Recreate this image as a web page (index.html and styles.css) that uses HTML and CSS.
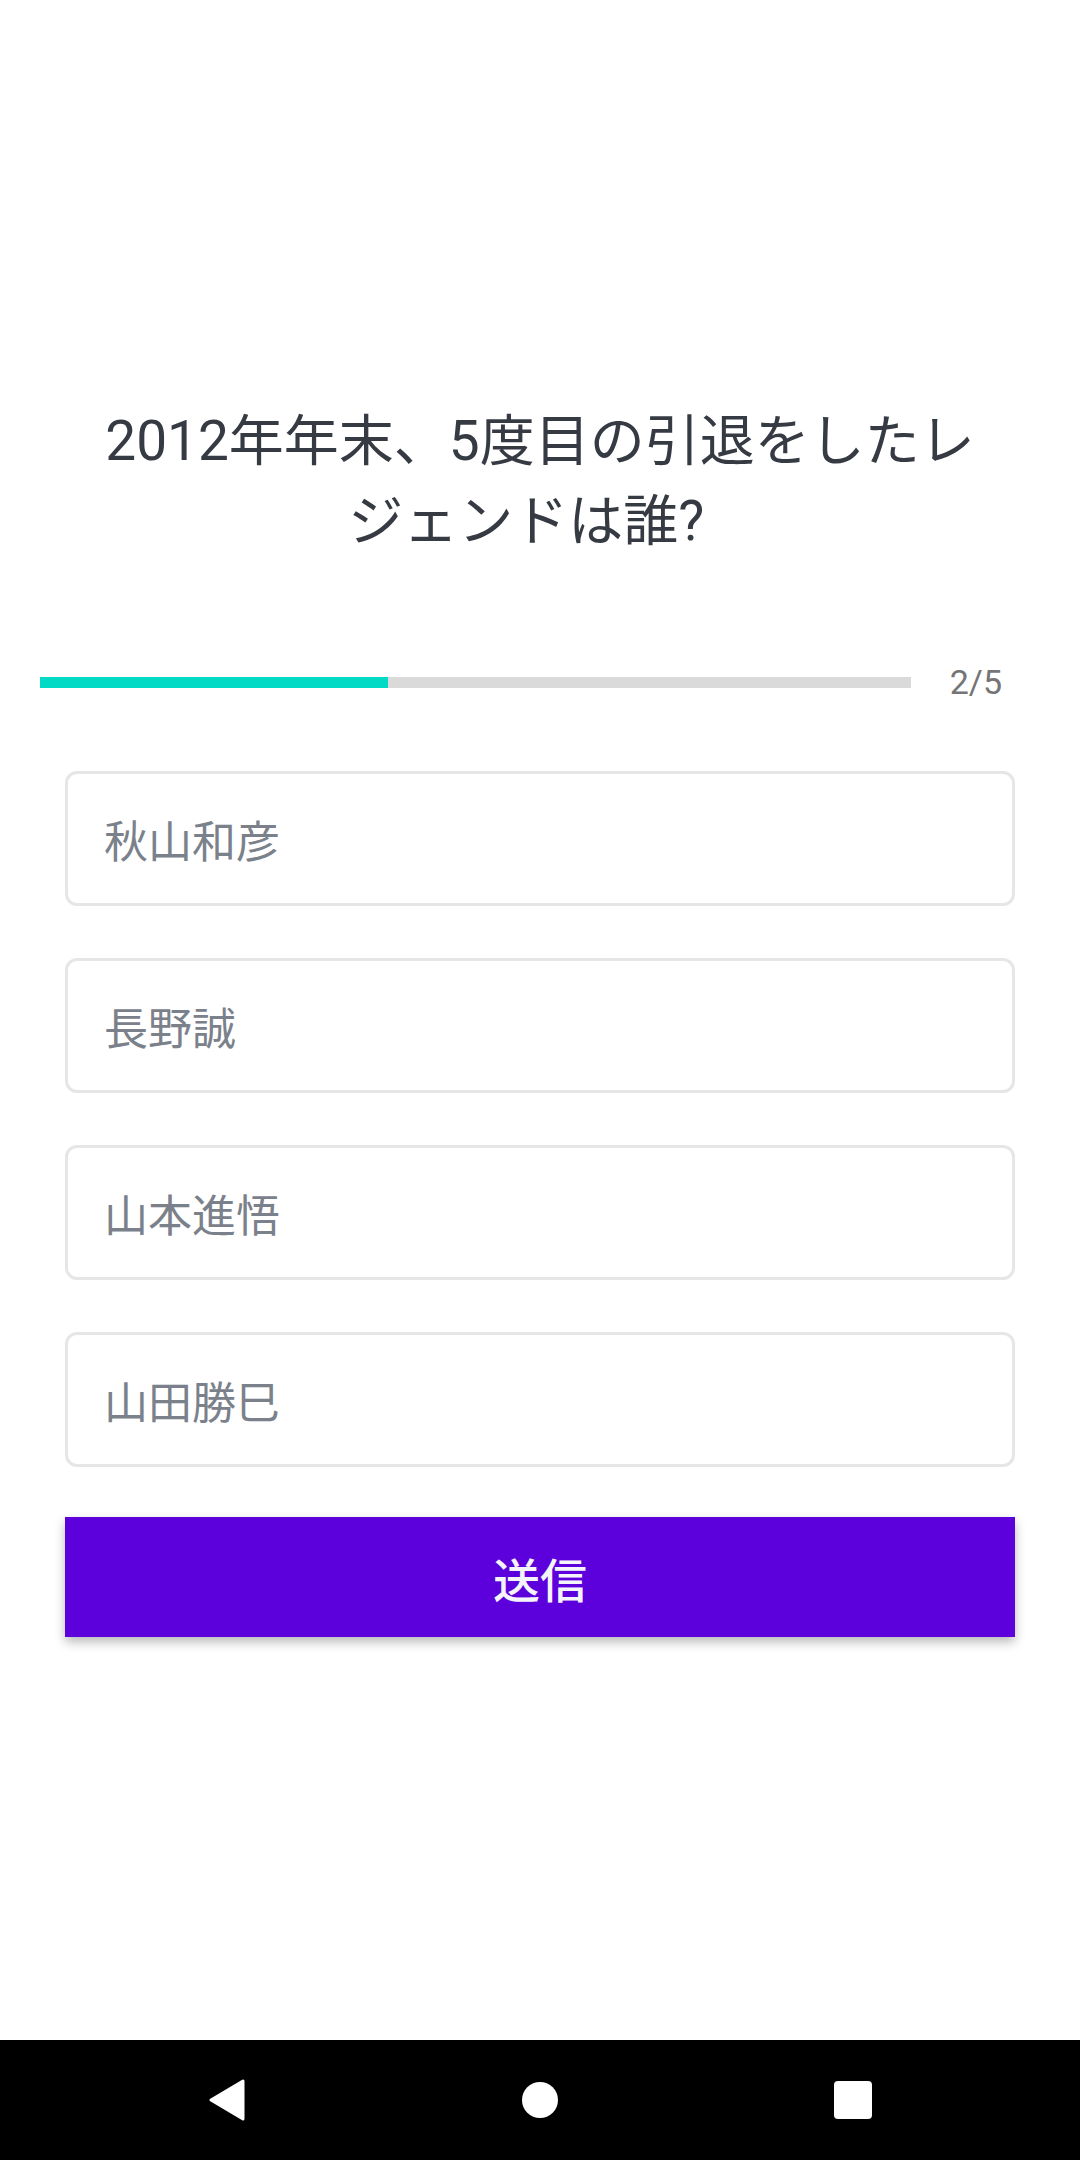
FILE: index.html
```html
<!DOCTYPE html>
<html lang="ja">
<head>
<meta charset="utf-8">
<link rel="stylesheet" href="styles.css">
</head>
<body>
<div class="screen">
  <main class="content">
    <h1 class="question">2012年年末、5度目の引退をしたレジェンドは誰?&nbsp;&nbsp;</h1>
    <div class="progress-row">
      <div class="track"><div class="fill" style="width:40%"></div></div>
      <span class="count">2/5</span>
    </div>
    <div class="options">
      <div class="option">秋山和彦</div>
      <div class="option">長野誠</div>
      <div class="option">山本進悟</div>
      <div class="option">山田勝巳</div>
    </div>
    <button class="submit">送信</button>
  </main>
  <nav class="navbar">
    <span class="nav-item">
      <svg width="38" height="42" viewBox="0 0 38 42"><path d="M35 2 L35 40 L3 21 Z" fill="#fff" stroke="#fff" stroke-width="3" stroke-linejoin="round"/></svg>
    </span>
    <span class="nav-item"><span class="home"></span></span>
    <span class="nav-item"><span class="recents"></span></span>
  </nav>
</div>
</body>
</html>
```

FILE: styles.css
```css
html, body {
  margin: 0;
  padding: 0;
  background: #ffffff;
}
body {
  font-family: "Roboto", "Noto Sans CJK JP", sans-serif;
}
.screen {
  width: 1080px;
  height: 2160px;
  display: flex;
  flex-direction: column;
  overflow: hidden;
}
.content {
  flex: 1;
  display: flex;
  flex-direction: column;
}
.question {
  margin: 0;
  padding: 401px 85px 0;
  font-size: 55px;
  line-height: 80px;
  font-weight: 400;
  color: #363a43;
  text-align: center;
}
.progress-row {
  display: flex;
  align-items: center;
  height: 40px;
  margin-top: 101px;
  padding: 0 78px 0 40px;
  gap: 39px;
}
.track {
  flex: 1;
  height: 11px;
  background: #dadada;
}
.fill {
  height: 100%;
  background: #03dac5;
}
.count {
  font-size: 34px;
  line-height: 40px;
  color: #757575;
}
.options {
  display: flex;
  flex-direction: column;
  gap: 52px;
  margin: 69px 65px 0;
}
.option {
  box-sizing: border-box;
  height: 135px;
  border: 3px solid #e6e6e6;
  border-radius: 12px;
  padding: 0 36px;
  display: flex;
  align-items: center;
  font-size: 44px;
  color: #7b818b;
}
.submit {
  margin: 50px 65px 0;
  height: 120px;
  border: none;
  border-radius: 0;
  background: #5c00dc;
  color: #f6f4fb;
  font-family: "Roboto", "Noto Sans CJK JP", sans-serif;
  font-size: 47px;
  font-weight: 500;
  box-shadow: 0 5px 10px rgba(0, 0, 0, 0.28);
}
.navbar {
  height: 120px;
  background: #000000;
  display: flex;
  align-items: center;
  justify-content: center;
  gap: 253px;
}
.nav-item {
  width: 60px;
  height: 60px;
  display: flex;
  align-items: center;
  justify-content: center;
}
.home {
  width: 36px;
  height: 36px;
  border-radius: 50%;
  background: #ffffff;
}
.recents {
  width: 38px;
  height: 38px;
  border-radius: 4px;
  background: #ffffff;
}
```
